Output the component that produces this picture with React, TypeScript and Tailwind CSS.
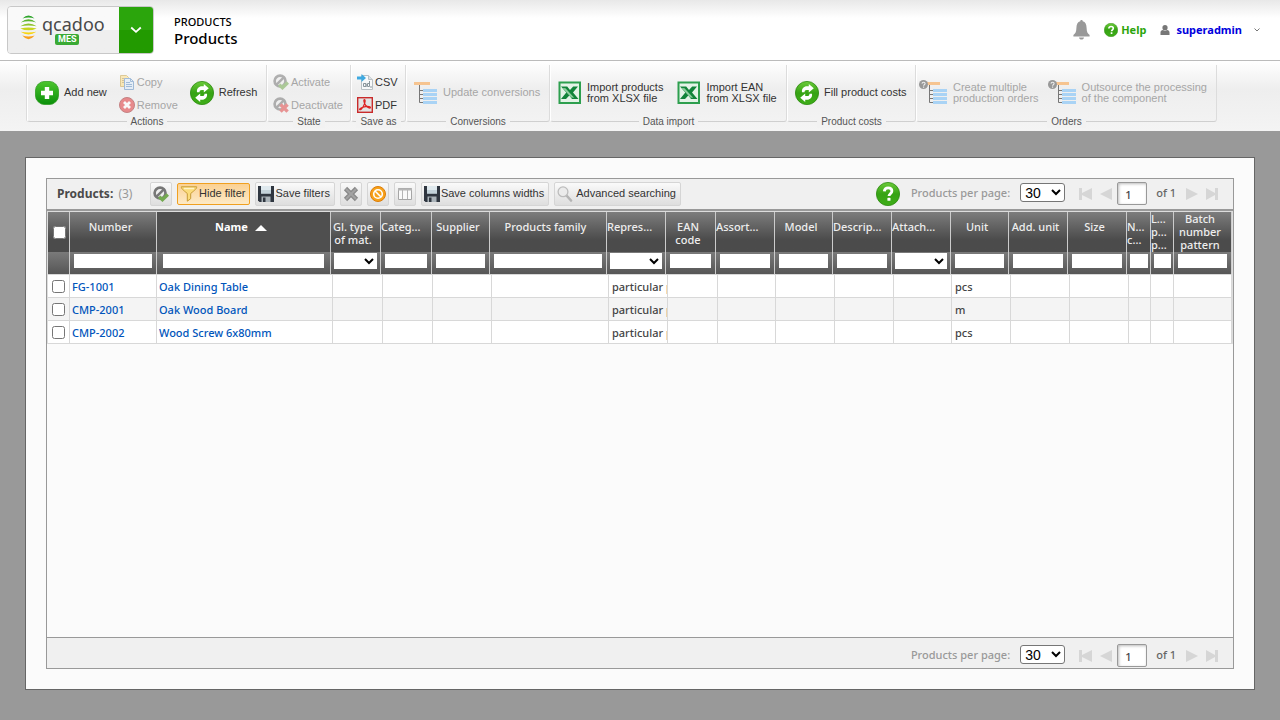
import type { ReactNode } from "react";
import clsx from "clsx";

type Column = {
  key: string;
  label: string;
  headWidth: number;
  bodyWidth: number;
  filter: "text" | "select";
  lines?: string[];
  sorted?: boolean;
};

type Product = {
  number: string;
  name: string;
  kind: string;
  unit: string;
};

const columns: Column[] = [
  { key: "number", label: "Number", headWidth: 87, bodyWidth: 87, filter: "text" },
  { key: "name", label: "Name", headWidth: 174, bodyWidth: 176, filter: "text", sorted: true },
  { key: "type", label: "Gl. type of mat.", headWidth: 50, bodyWidth: 50, filter: "select", lines: ["Gl. type", "of mat."] },
  { key: "category", label: "Categ...", headWidth: 51, bodyWidth: 50, filter: "text" },
  { key: "supplier", label: "Supplier", headWidth: 58, bodyWidth: 59, filter: "text" },
  { key: "family", label: "Products family", headWidth: 117, bodyWidth: 117, filter: "text" },
  { key: "kind", label: "Repres...", headWidth: 59, bodyWidth: 59, filter: "select" },
  { key: "ean", label: "EAN code", headWidth: 50, bodyWidth: 50, filter: "text", lines: ["EAN", "code"] },
  { key: "assortment", label: "Assort...", headWidth: 59, bodyWidth: 58, filter: "text" },
  { key: "model", label: "Model", headWidth: 58, bodyWidth: 59, filter: "text" },
  { key: "description", label: "Descrip...", headWidth: 59, bodyWidth: 59, filter: "text" },
  { key: "attachment", label: "Attach...", headWidth: 59, bodyWidth: 58, filter: "select" },
  { key: "unit", label: "Unit", headWidth: 58, bodyWidth: 59, filter: "text" },
  { key: "addUnit", label: "Add. unit", headWidth: 59, bodyWidth: 59, filter: "text" },
  { key: "size", label: "Size", headWidth: 59, bodyWidth: 59, filter: "text" },
  { key: "nc", label: "N... c...", headWidth: 24, bodyWidth: 22, filter: "text", lines: ["N...", "c..."] },
  { key: "lpp", label: "L... p... p...", headWidth: 23, bodyWidth: 23, filter: "text", lines: ["L...", "p...", "p..."] },
  { key: "batch", label: "Batch number pattern", headWidth: 58, bodyWidth: 58, filter: "text", lines: ["Batch", "number", "pattern"] },
];

const products: Product[] = [
  { number: "FG-1001", name: "Oak Dining Table", kind: "particular product", unit: "pcs" },
  { number: "CMP-2001", name: "Oak Wood Board", kind: "particular product", unit: "m" },
  { number: "CMP-2002", name: "Wood Screw 6x80mm", kind: "particular product", unit: "pcs" },
];

/* ---------- icons ---------- */

function LogoMark() {
  return (
    <svg width="17" height="25" viewBox="0 0 17 25" className="shrink-0">
      <path d="M2.500 3.600Q8.500-2.800 14.500 3.600Q8.500 1.400 2.500 3.600z" fill="#2fa52c" />
      <path d="M.8 7.600Q8.500.8 16.200 7.600Q8.500 4.900.8 7.600z" fill="#5bb52b" />
      <path d="M.3 11.300Q8.500 5.700 16.700 11.300Q8.500 9.600.3 11.300z" fill="#8fc32b" />
      <path d="M.3 13.400Q8.500 11.800 16.700 13.400Q8.500 17.200.3 13.400z" fill="#c8d420" />
      <path d="M.6 16.800Q8.500 18.300 16.400 16.800Q8.500 22 .6 16.800z" fill="#f7d50c" />
      <path d="M2.300 20.600Q8.500 22.400 14.700 20.600Q8.500 28 2.300 20.600z" fill="#f9a01b" />
    </svg>
  );
}

function GreenDisc({ children, size = 24 }: { children: ReactNode; size?: number }) {
  return (
    <svg width={size} height={size} viewBox="0 0 24 24" className="shrink-0">
      <defs>
        <linearGradient id="disc" x1="0" y1="0" x2="0" y2="1">
          <stop offset="0" stopColor="#6ccb3a" />
          <stop offset="0.5" stopColor="#36a314" />
          <stop offset="1" stopColor="#3fae18" />
        </linearGradient>
      </defs>
      <circle cx="12" cy="12" r="11.6" fill="url(#disc)" stroke="#2c8a10" strokeWidth="0.8" />
      {children}
    </svg>
  );
}

function AddIcon() {
  return (
    <svg width="24" height="24" viewBox="0 0 24 24" className="shrink-0">
      <defs>
        <linearGradient id="add" x1="0" y1="0" x2="0" y2="1">
          <stop offset="0" stopColor="#4cc62e" />
          <stop offset="1" stopColor="#0a8f0a" />
        </linearGradient>
      </defs>
      <rect x="0.4" y="0.4" width="23.2" height="23.2" rx="9.5" fill="url(#add)" stroke="#2a9a1c" strokeWidth="0.8" />
      <path d="M9.800 6h4.400v3.800H18v4.400h-3.800V18H9.800v-3.800H6V9.800h3.800z" fill="#fff" />
    </svg>
  );
}

function RefreshIcon() {
  return (
    <GreenDisc>
      <path d="M7 11.300c-.6-3.600 1.800-6 5-6h1.800V3l5 4.300-5 4.100V8.900h-2c-1.700 0-2.300.8-2.200 2.400z" fill="#fff" />
      <path d="M17 12.700c.6 3.600-1.800 6-5 6h-1.800V21l-5-4.300 5-4.100v2.500h2c1.700 0 2.300-.8 2.200-2.400z" fill="#fff" />
    </GreenDisc>
  );
}

function QuestionIcon({ size = 24 }: { size?: number }) {
  return (
    <GreenDisc size={size}>
      <path d="M8.300 9.400c.2-2.300 1.700-3.500 3.900-3.500 2.200 0 3.700 1.200 3.700 3.100 0 2.700-2.900 2.700-2.900 5.100" fill="none" stroke="#fff" strokeWidth="2.800" />
      <rect x="11.400" y="15.800" width="3.100" height="3" rx="0.600" fill="#fff" />
    </GreenDisc>
  );
}

function CopyIcon() {
  return (
    <svg width="16" height="16" viewBox="0 0 16 16" className="shrink-0 opacity-55">
      <path d="M1.500 1.500h6l2 2v9h-8z" fill="#ffdf85" stroke="#c9a548" />
      <path d="M3 4.500h3M3 6.500h2M3 8.500h2" stroke="#b89a55" />
      <path d="M5.500 4.500h6l3 3v8h-9z" fill="#dcebfb" stroke="#5f8fc4" />
      <path d="M11.500 4.500v3h3M7 8.500h4M7 10.500h6M7 12.500h6" fill="none" stroke="#5f8fc4" />
    </svg>
  );
}

function RemoveIcon() {
  return (
    <svg width="16" height="16" viewBox="0 0 16 16" className="shrink-0 opacity-60">
      <circle cx="8" cy="8" r="7.500" fill="#e2474a" stroke="#a83a3c" />
      <path d="M5 5l6 6M11 5l-6 6" stroke="#fff" strokeWidth="2.800" />
    </svg>
  );
}

function StateIcon({ kind, muted }: { kind: "on" | "off"; muted?: boolean }) {
  return (
    <svg width="16" height="16" viewBox="0 0 17 17" className={clsx("shrink-0", muted && "opacity-55")}>
      <circle cx="7.500" cy="7.500" r="5.800" fill="#eee" stroke="#777" strokeWidth="2.800" />
      <path d="M3.500 11.500l8-8" stroke="#777" strokeWidth="2.600" />
      {kind === "on" ? (
        <path d="M6.500 11.500l3.500 3 5.800-5.500" fill="none" stroke="#74a951" strokeWidth="3.600" />
      ) : (
        <path d="M8 8l7.500 7.500M15.500 8L8 15.500" fill="none" stroke="#e04848" strokeWidth="3.600" />
      )}
    </svg>
  );
}

function CsvIcon() {
  return (
    <svg width="16" height="16" viewBox="0 0 16 16" className="shrink-0">
      <path d="M4.500 1.500h7l4 4v10h-11z" fill="#f7f9fa" stroke="#b9c0c4" />
      <path d="M11.500 1.500v4h4" fill="#dde2e5" stroke="#b9c0c4" />
      <path d="M9 9.500H6.500v3H9zM9 10v3M12.500 7v5.500H10.500v-3h2M14 12v2" fill="none" stroke="#8a969c" />
      <path d="M0 2.500h4.500V0L9 4 4.500 8V5.500H0z" fill="#3fa9e0" />
    </svg>
  );
}

function PdfIcon() {
  return (
    <svg width="16" height="16" viewBox="0 0 16 16" className="shrink-0">
      <rect x="0.700" y="0.700" width="14.600" height="14.600" fill="#e3e3e3" stroke="#c92a2a" strokeWidth="1.400" />
      <path d="M7.300 2.500c1.500 0 .8 3.500-.8 6.500-1.300 2.500-3 4.300-3.800 3.600-.8-.9 2.600-2.600 5.800-3 3-.4 5.100.2 4.900 1-.3 1.200-3.200-.2-4.700-2.200C7.300 6.700 6.200 2.700 7.300 2.500z" fill="none" stroke="#d22" strokeWidth="1.200" />
    </svg>
  );
}

function TreeIcon({ question }: { question?: boolean }) {
  return (
    <svg
      width={question ? 29 : 24}
      height="26"
      viewBox={question ? "-5 -3 29 26" : "0 -3 24 26"}
      className="shrink-0"
    >
      <rect x="0" y="-1" width="16" height="3" fill="#f6c490" />
      <path d="M5.500 2v17.500M5.500 7.500H9M5.500 11.500H9M5.500 15.500H9M5.500 19.500H9" stroke="#777" fill="none" />
      <path d="M9 6h14v3H9zM9 10h14v3H9zM9 14h14v3H9zM9 18h14v3H9z" fill="#a9d3f5" />
      {question && (
        <>
          <circle cx="-0.500" cy="1.500" r="4.500" fill="#999" />
          <path d="M-2 .6c.1-1.900 3.200-1.800 3.100 0 0 1.100-1.500 1.100-1.500 2.200M-.4 3.500v1.200" fill="none" stroke="#eee" strokeWidth="1.100" />
        </>
      )}
    </svg>
  );
}

function ExcelIcon() {
  return (
    <svg width="24" height="24" viewBox="0 0 24 24" className="shrink-0">
      <rect x="0.500" y="0.500" width="22.500" height="22.500" fill="#2d9f4e" />
      <rect x="2.500" y="2.500" width="18.500" height="18.500" fill="#e4f3e7" />
      <path d="M3 5.500h6.200l2.800 3.400 3.200-3.400H20l-5 6 5.500 6.500H14l-2.700-3.500L8 18H3l5.300-6.500z" fill="#12843a" />
      <path d="M4.500 7l3 .2 8.700 9.500-3-.2z" fill="#8fcf9f" />
    </svg>
  );
}

function FloppyIcon() {
  return (
    <svg width="16" height="16" viewBox="0 0 16 16" className="shrink-0">
      <path d="M0 0h16v16H1.500L0 14.500z" fill="#2f3640" />
      <path d="M3 0h10v7.500H3z" fill="#dfe9ee" />
      <path d="M3 4h10v3.500H3z" fill="#c3d2da" />
      <path d="M3.500 10.500h9V16h-9z" fill="#aab3b9" />
      <path d="M5 11.500h2.500V16H5z" fill="#2f3640" />
    </svg>
  );
}

function FunnelIcon() {
  return (
    <svg width="18" height="16" viewBox="0 0 17 16" className="shrink-0">
      <path d="M.8.8h15.400c0 2-1.600 3-6 6.700v5.200l-3.400 2.500V7.500C2.400 3.800.8 2.800.8.800z" fill="#fbdc7c" stroke="#c79b35" />
      <path d="M3.500 2.500h10" stroke="#fff3c8" strokeWidth="1.400" />
    </svg>
  );
}

function CrossIcon() {
  return (
    <svg width="16" height="16" viewBox="0 0 16 16">
      <path d="M2.500 2.500l11 11M13.500 2.500l-11 11" stroke="#8a8a8a" strokeWidth="4.600" />
      <path d="M3 3l10 10M13 3L3 13" stroke="#a3a3a3" strokeWidth="2" />
    </svg>
  );
}

function ClearIcon() {
  return (
    <svg width="16" height="16" viewBox="0 0 16 16">
      <circle cx="8" cy="8" r="7.500" fill="#f7a21b" stroke="#dd7d08" />
      <circle cx="8" cy="8" r="4.300" fill="none" stroke="#fff" strokeWidth="1.600" />
      <path d="M5 5l6 6" stroke="#fff" strokeWidth="1.600" />
    </svg>
  );
}

function ColumnsIcon() {
  return (
    <svg width="16" height="16" viewBox="0 0 16 16">
      <path d="M1.500 2.500h13v11h-13z" fill="#fafafa" stroke="#a6a6a6" />
      <path d="M1 2.500h14v2H1z" fill="#b5b5b5" />
      <path d="M5.500 4v9M10.500 4v9" stroke="#b5b5b5" />
    </svg>
  );
}

function LensIcon() {
  return (
    <svg width="16" height="16" viewBox="0 0 16 16" className="shrink-0">
      <path d="M9.500 9.500l4.500 5" stroke="#b4b4b4" strokeWidth="2.600" strokeLinecap="round" />
      <circle cx="6" cy="5.800" r="4.900" fill="#ebebeb" stroke="#bcbcbc" strokeWidth="1.300" />
    </svg>
  );
}

function BellIcon() {
  return (
    <svg width="17" height="20" viewBox="0 0 17 20">
      <path d="M8.500 0c.8 0 1.200.5 1.200 1.300C12.500 2 13.500 4.500 13.600 8c.1 4 1 5.500 3 7v1.500H.4V15c2-1.500 2.900-3 3-7 .1-3.500 1.100-6 3.900-6.700C7.300.5 7.700 0 8.500 0z" fill="#999" />
      <path d="M6 17.500h5c-.3 1.400-1.200 2-2.500 2s-2.200-.6-2.500-2z" fill="#999" />
    </svg>
  );
}

function UserIcon() {
  return (
    <svg width="10" height="10" viewBox="0 0 10 10">
      <circle cx="5" cy="2.700" r="2.600" fill="#777" />
      <path d="M.5 10V7.500C.5 6 1.500 5.300 3 5c1.200.9 2.800.9 4 0 1.500.3 2.500 1 2.500 2.500V10z" fill="#777" />
    </svg>
  );
}

/* ---------- ribbon ---------- */

function BigButton({ icon, lines, disabled }: { icon: ReactNode; lines: string[]; disabled?: boolean }) {
  return (
    <button
      type="button"
      disabled={disabled}
      className={clsx(
        "flex items-center gap-[5px] text-left text-[11px] leading-[11px] whitespace-nowrap",
        disabled ? "text-[#a6a6a6]" : "text-[#333]"
      )}
    >
      {icon}
      <span>
        {lines.map((line) => (
          <span key={line} className="block">
            {line}
          </span>
        ))}
      </span>
    </button>
  );
}

function SmallButton({ icon, label, disabled }: { icon: ReactNode; label: string; disabled?: boolean }) {
  return (
    <button
      type="button"
      disabled={disabled}
      className={clsx(
        "flex h-[23px] items-center gap-[2px] text-[11px] whitespace-nowrap",
        disabled ? "text-[#a6a6a6]" : "text-[#333]"
      )}
    >
      {icon}
      {label}
    </button>
  );
}

function RibbonGroup({ title, className, children }: { title: string; className: string; children: ReactNode }) {
  return (
    <section className={clsx("flex shrink-0 flex-col items-center", className)}>
      <div className="flex h-[57px] w-full shrink-0 items-center rounded-b-[3px] border-r border-b border-l border-r-[#dcdcdc] border-b-[#cfcfcf] border-l-white pb-px">
        {children}
      </div>
      <h2 className="-mt-[6px] bg-[#f2f2f2] px-1 text-[10px] leading-[12px] text-[#555]">{title}</h2>
    </section>
  );
}

function Ribbon() {
  return (
    <div className="flex h-[70px] bg-linear-to-b from-white via-[#eeeeee] via-40% to-[#f4f4f4] pt-1 pl-[26px] font-['Liberation_Sans',Arial,sans-serif]">
      <div className="flex h-[57px] rounded-bl-[3px] border-l border-[#dcdcdc]">
        <RibbonGroup title="Actions" className="w-[240px]">
          <div className="flex items-center gap-3 pl-[7px]">
            <BigButton icon={<AddIcon />} lines={["Add new"]} />
            <div className="pt-[2px]">
              <SmallButton icon={<CopyIcon />} label="Copy" disabled />
              <SmallButton icon={<RemoveIcon />} label="Remove" disabled />
            </div>
            <BigButton icon={<RefreshIcon />} lines={["Refresh"]} />
          </div>
        </RibbonGroup>
        <RibbonGroup title="State" className="w-[84px]">
          <div className="pt-[2px] pl-[5px]">
            <SmallButton icon={<StateIcon kind="on" muted />} label="Activate" disabled />
            <SmallButton icon={<StateIcon kind="off" muted />} label="Deactivate" disabled />
          </div>
        </RibbonGroup>
        <RibbonGroup title="Save as" className="w-[55px]">
          <div className="pt-[2px] pl-[5px]">
            <SmallButton icon={<CsvIcon />} label="CSV" />
            <SmallButton icon={<PdfIcon />} label="PDF" />
          </div>
        </RibbonGroup>
        <RibbonGroup title="Conversions" className="w-[144px]">
          <div className="pl-[7px]">
            <BigButton icon={<TreeIcon />} lines={["Update conversions"]} disabled />
          </div>
        </RibbonGroup>
        <RibbonGroup title="Data import" className="w-[237px]">
          <div className="flex gap-[14px] pl-[7px]">
            <BigButton icon={<ExcelIcon />} lines={["Import products", "from XLSX file"]} />
            <BigButton icon={<ExcelIcon />} lines={["Import EAN", "from XLSX file"]} />
          </div>
        </RibbonGroup>
        <RibbonGroup title="Product costs" className="w-[129px]">
          <div className="pl-[7px]">
            <BigButton icon={<RefreshIcon />} lines={["Fill product costs"]} />
          </div>
        </RibbonGroup>
        <RibbonGroup title="Orders" className="w-[301px]">
          <div className="flex gap-[9px] pl-[2px]">
            <BigButton icon={<TreeIcon question />} lines={["Create multiple", "production orders"]} disabled />
            <BigButton icon={<TreeIcon question />} lines={["Outsource the processing", "of the component"]} disabled />
          </div>
        </RibbonGroup>
      </div>
    </div>
  );
}

/* ---------- header ---------- */

function TopBar() {
  return (
    <header className="flex h-[61px] items-center border-b border-[#bbb] bg-linear-to-b from-[#e8e8e8] via-white via-30% to-white pl-[7px]">
      <div className="flex h-12 overflow-hidden rounded-[4px] border border-[#c8c8c8]">
        <a
          href="#home"
          aria-label="qcadoo MES"
          className="flex w-[111px] items-start bg-linear-to-b from-[#f9f9f9] from-50% to-[#efefef] to-50% pt-2 pl-3"
        >
          <LogoMark />
          <span className="flex flex-col items-start pl-[5px]">
            <span className="font-['Noto_Sans',sans-serif] text-[18px] leading-[19px] text-[#4a4a4a]">qcadoo</span>
            <span className="ml-[13px] rounded-[2px] bg-[#3aaa35] px-[3px] font-['Roboto',sans-serif] text-[9px] leading-[11px] font-bold text-white">
              MES
            </span>
          </span>
        </a>
        <button
          type="button"
          aria-label="Open menu"
          className="flex w-[34px] items-center justify-center bg-linear-to-b from-[#2ba50c] from-50% to-[#229a00] to-50%"
        >
          <svg width="12" height="8" viewBox="0 0 12 8">
            <path d="M1.200 1.500L6 5.800l4.800-4.300" fill="none" stroke="#fff" strokeWidth="1.800" />
          </svg>
        </button>
      </div>
      <div className="pt-[2px] pl-5 text-black">
        <p className="text-[11px] leading-[14px] font-medium">PRODUCTS</p>
        <h1 className="text-[15px] leading-[18px] font-medium">Products</h1>
      </div>
      <nav className="ml-auto flex items-center pr-5 text-[11px] font-bold">
        <button type="button" aria-label="Notifications" className="mr-[14px]">
          <BellIcon />
        </button>
        <a href="#help" className="mr-[14px] flex items-center gap-[3px] text-[#2ba50c]">
          <QuestionIcon size={14} />
          Help
        </a>
        <button type="button" className="flex items-center gap-[6px] text-[#0000dd]">
          <UserIcon />
          superadmin
          <svg width="6" height="4" viewBox="0 0 6 4" className="ml-[6px]">
            <path d="M.5.500L3 3 5.500.500" fill="none" stroke="#777" />
          </svg>
        </button>
      </nav>
    </header>
  );
}

/* ---------- grid ---------- */

function ToolButton({
  icon,
  label,
  name,
  active,
}: {
  icon: ReactNode;
  label?: string;
  name?: string;
  active?: boolean;
}) {
  return (
    <button
      type="button"
      aria-label={name}
      aria-pressed={active}
      className={clsx(
        "flex items-center justify-center gap-px rounded-[2px] border text-[11px] whitespace-nowrap text-[#333]",
        label ? "pr-1 pl-[2px]" : "w-[22px]",
        active
          ? "h-[22px] border-[#f0a020] bg-linear-to-b from-[#fbd193] to-[#fdeac6]"
          : "h-6 border-[#d5d5d5] bg-linear-to-b from-[#fafafa] to-[#dedede]"
      )}
    >
      {icon}
      {label}
    </button>
  );
}

function PageArrow({ name, path }: { name: string; path: string }) {
  return (
    <button type="button" aria-label={name} disabled>
      <svg width="14" height="12" viewBox="0 0 14 12">
        <path d={path} fill="#d6d6d6" />
      </svg>
    </button>
  );
}

function Pager({ id }: { id: string }) {
  return (
    <div className="flex items-center pr-[14px] text-[11px] font-medium">
      <label htmlFor={`${id}-size`} className="mr-[10px] text-[#999]">
        Products per page:
      </label>
      <select
        id={`${id}-size`}
        defaultValue="30"
        className="mr-[14px] mb-[2px] h-[19px] w-[45px] rounded-[3px] border border-[#767676] bg-white font-['Liberation_Sans',Arial,sans-serif] text-[14px] leading-4 font-normal text-black"
      >
        <option>30</option>
        <option>50</option>
        <option>100</option>
      </select>
      <PageArrow name="First page" path="M0 0h3v5L13 0v12L3 7v5H0z" />
      <span className="w-[6px]" />
      <PageArrow name="Previous page" path="M13 0v12L1 6z" />
      <input
        type="text"
        aria-label="Page"
        defaultValue="1"
        className="mr-[5px] ml-1 h-[23px] w-[30px] rounded-[2px] border border-[#999] bg-white pt-[2px] pl-[7px] text-[11px] text-[#444] shadow-[inset_1px_1px_3px_#bbb]"
      />
      <span className="mr-[9px] ml-1 text-[#666]">of 1</span>
      <PageArrow name="Next page" path="M1 0v12l12-6z" />
      <span className="w-[6px]" />
      <PageArrow name="Last page" path="M13 0h-3v5L1 0v12l9-5v5h3z" />
    </div>
  );
}

function Toolbar() {
  return (
    <div className="flex h-[30px] items-center bg-[#f0f0f0] pb-px">
      <h2 className="w-[103px] pl-[10px] text-[12px] font-bold text-[#4a4a4a]">
        Products: <span className="ml-[2px] font-normal text-[#999]">(3)</span>
      </h2>
      <div className="flex items-center gap-[5px] font-['Liberation_Sans',Arial,sans-serif]">
        <ToolButton icon={<StateIcon kind="on" />} name="Show only active" />
        <ToolButton icon={<FunnelIcon />} label="Hide filter" active />
        <ToolButton icon={<FloppyIcon />} label="Save filters" />
        <ToolButton icon={<CrossIcon />} name="Remove filters" />
        <ToolButton icon={<ClearIcon />} name="Clear filters" />
        <ToolButton icon={<ColumnsIcon />} name="Choose columns" />
        <ToolButton icon={<FloppyIcon />} label="Save columns widths" />
        <ToolButton icon={<span className="mr-[2px]"><LensIcon /></span>} label="Advanced searching" />
      </div>
      <a href="#grid-help" aria-label="Grid help" className="mr-[11px] ml-auto">
        <QuestionIcon />
      </a>
      <Pager id="top" />
    </div>
  );
}

function HeadTable() {
  return (
    <table className="w-full table-fixed border-separate border-spacing-0">
      <colgroup>
        <col style={{ width: 22 }} />
        {columns.map((column) => (
          <col key={column.key} style={{ width: column.headWidth }} />
        ))}
      </colgroup>
      <thead>
        <tr className="h-10 bg-linear-to-b from-[#7d7d7d] to-[#4b4b4b] to-70% text-[11px] leading-[13px] text-[#eee]">
          <th className="border-r border-[#ccc] p-0">
            <input type="checkbox" aria-label="Select all" className="ml-[5px] block size-[13px]" />
          </th>
          {columns.map((column) => (
            <th
              key={column.key}
              scope="col"
              aria-sort={column.sorted ? "ascending" : undefined}
              className={clsx(
                "overflow-hidden border-r border-[#ccc] pb-0 pl-0 align-top whitespace-nowrap",
                column.sorted ? "bg-[#4f4f4f] font-bold text-white" : "font-medium",
                column.lines?.length === 3 ? "pt-0" : "pt-2",
                column.label.includes("...") ? "pr-0 text-left" : "pr-[5px] text-center"
              )}
            >
              {(column.lines ?? [column.label]).map((line, index) => (
                <span key={index} className="block">
                  {line}
                  {column.sorted && (
                    <svg width="12" height="6" viewBox="0 0 12 6" className="ml-[7px] inline-block align-middle">
                      <path d="M6 0l6 6H0z" fill="#fff" />
                    </svg>
                  )}
                </span>
              ))}
            </th>
          ))}
        </tr>
        <tr className="h-[22px] bg-linear-to-b from-[#7a7a7a] to-[#565656]">
          <td className="border-r border-[#ccc] p-0" />
          {columns.map((column) => (
            <td key={column.key} className="border-r border-[#ccc] p-0 align-top">
              {column.filter === "select" ? (
                <select
                  aria-label={`Filter ${column.label}`}
                  className="mt-px ml-[3px] block h-4 w-[calc(100%-6px)] bg-white text-[11px] text-black"
                >
                  <option />
                </select>
              ) : (
                <input
                  type="text"
                  aria-label={`Filter ${column.label}`}
                  className={clsx(
                    "mt-[2px] block h-[14px] bg-white text-[11px]",
                    column.sorted
                      ? "ml-[6px] w-[calc(100%-12px)]"
                      : column.headWidth < 30
                        ? "ml-[3px] w-[calc(100%-5px)]"
                        : "ml-1 w-[calc(100%-8px)]"
                  )}
                />
              )}
            </td>
          ))}
        </tr>
      </thead>
    </table>
  );
}

function ProductCell({ column, product }: { column: Column; product: Product }) {
  if (column.key === "number" || column.key === "name") {
    return (
      <a href={`#${product.number}`} className="text-[#0055bb]">
        {product[column.key]}
      </a>
    );
  }
  if (column.key === "kind" || column.key === "unit") {
    return <span className="pl-px">{product[column.key]}</span>;
  }
  return null;
}

function BodyTable() {
  return (
    <table className="w-full table-fixed border-separate border-spacing-0 text-[11px] leading-[14px] font-medium text-[#444]">
      <colgroup>
        <col style={{ width: 22 }} />
        {columns.map((column) => (
          <col key={column.key} style={{ width: column.bodyWidth }} />
        ))}
      </colgroup>
      <tbody>
        {products.map((product) => (
          <tr key={product.number} className="h-[23px] bg-white even:bg-[#f4f4f4]">
            <td className="border-r border-b border-[#d8d8d8] p-0">
              <input type="checkbox" aria-label={`Select ${product.number}`} className="ml-1 block size-[13px]" />
            </td>
            {columns.map((column) => (
              <td
                key={column.key}
                className="overflow-hidden border-r border-b border-[#d8d8d8] pt-[2px] pr-0 pb-0 pl-[2px] whitespace-nowrap"
              >
                <ProductCell column={column} product={product} />
              </td>
            ))}
          </tr>
        ))}
      </tbody>
    </table>
  );
}

export default function App() {
  return (
    <div className="flex min-h-screen flex-col bg-[#999] font-['Noto_Sans','Open_Sans',sans-serif]">
      <TopBar />
      <Ribbon />
      <main className="mx-[25px] mt-[26px] mb-[30px] flex flex-1 flex-col border border-[#666] bg-[#fbfbfb] p-5">
        <div className="flex flex-1 flex-col border border-[#999]">
          <Toolbar />
          <div className="flex-1 border-t-2 border-b border-[#999]">
            <div className="h-full border-x border-t border-[#ddd]">
              <HeadTable />
              <div className="border-t border-[#d8d8d8]">
                <BodyTable />
              </div>
            </div>
          </div>
          <div className="flex h-[30px] items-center justify-end bg-[#f0f0f0] pt-[5px]">
            <Pager id="bottom" />
          </div>
        </div>
      </main>
    </div>
  );
}
